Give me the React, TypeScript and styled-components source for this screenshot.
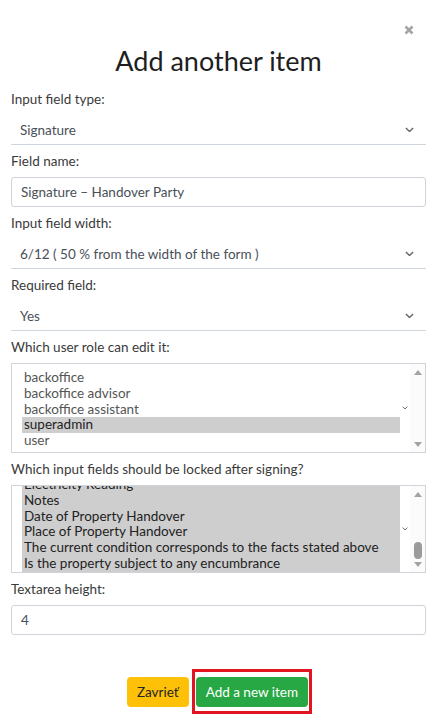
import React from 'react';
import styled, { createGlobalStyle } from 'styled-components';

const GlobalStyle = createGlobalStyle`
    html, body {
        margin: 0;
        padding: 0;
        background: #fff;
    }
    body {
        font-family: Lato, "Open Sans", "Liberation Sans", sans-serif;
        color: #333;
    }
`

const Modal = styled.div`
    width: 437px;
    box-sizing: border-box;
    padding: 22px 11px 0 11px;
`

const CloseRow = styled.div`
    display: flex;
    justify-content: flex-end;
    padding-right: 11px;
    height: 16px;
    align-items: center;
`

const CloseButton = styled.button`
    border: none;
    background: none;
    padding: 0;
    width: 12px;
    height: 12px;
    display: flex;
    align-items: center;
    justify-content: center;
    cursor: pointer;
`

const Title = styled.h2`
    margin: 6px 0 11px 0;
    text-align: center;
    font-size: 27px;
    line-height: 34px;
    font-weight: 400;
    color: #1e1e1e;
`

const Group = styled.div`
    display: flex;
    flex-direction: column;
    margin-bottom: 6px;
`

const Label = styled.label`
    font-size: 13.5px;
    line-height: 20px;
    color: #3a3a3a;
    margin-bottom: 6px;
`

const SelectRow = styled.div`
    height: 30px;
    box-sizing: border-box;
    border-bottom: 1px solid #cfd6de;
    display: flex;
    align-items: center;
    justify-content: space-between;
    padding: 0 12px 0 9px;
    font-size: 13.5px;
    color: #495057;
`

const TextInput = styled.div`
    height: 30px;
    box-sizing: border-box;
    border: 1px solid #ced4da;
    border-radius: 3px;
    display: flex;
    align-items: center;
    padding: 0 9px;
    font-size: 13.5px;
    color: #495057;
`

const ListBox = styled.div<{ $height: number }>`
    height: ${p => p.$height}px;
    box-sizing: border-box;
    border: 1px solid #ced4da;
    display: flex;
    overflow: hidden;
`

const Options = styled.div<{ $offset: number }>`
    flex: 1;
    margin-top: ${p => p.$offset}px;
    padding-left: 10px;
    display: flex;
    flex-direction: column;
`

const Option = styled.div<{ $selected?: boolean }>`
    font-size: 13.5px;
    line-height: 15.75px;
    padding: 0 2px;
    color: ${p => (p.$selected ? '#222' : '#555')};
    background: ${p => (p.$selected ? '#cecece' : 'transparent')};
    white-space: nowrap;
`

const ListHint = styled.div`
    width: 10px;
    display: flex;
    align-items: center;
    justify-content: center;
`

const ScrollTrack = styled.div`
    width: 15px;
    display: flex;
    flex-direction: column;
    align-items: center;
    justify-content: space-between;
    padding: 6px 0 5px 0;
    background: #fbfbfb;
`

const Arrow = styled.div<{ $up?: boolean }>`
    width: 0;
    height: 0;
    border-left: 4px solid transparent;
    border-right: 4px solid transparent;
    ${p => (p.$up ? 'border-bottom: 5px solid #a3a3a3;' : 'border-top: 5px solid #a3a3a3;')}
`

const TrackMiddle = styled.div`
    flex: 1;
    display: flex;
    flex-direction: column;
    justify-content: flex-end;
    align-items: center;
    padding-bottom: 3px;
`

const Thumb = styled.div`
    width: 8px;
    height: 17px;
    border-radius: 4px;
    background: #9b9b9b;
`

const Buttons = styled.div`
    display: flex;
    justify-content: center;
    align-items: center;
    margin-top: 34px;
    gap: 3px;
    padding-left: 2px;
`

const Button = styled.button<{ $color: string; $text: string }>`
    height: 30px;
    border: none;
    border-radius: 4px;
    padding: 0 10px;
    font-family: inherit;
    font-size: 13.5px;
    background-color: ${p => p.$color};
    color: ${p => p.$text};
`

const Highlight = styled.div`
    border: 3px solid #e0151f;
    padding: 5px 1px 4px 1px;
    display: flex;
`

const Chevron = ({ size = 9 }: { size?: number }) => (
    <svg width={size} height={size * 0.6} viewBox="0 0 10 6">
        <polyline points="1,1 5,5 9,1" fill="none" stroke="#666" strokeWidth="1.6" />
    </svg>
)

const roles = ['backoffice', 'backoffice advisor', 'backoffice assistant', 'superadmin', 'user']
const locked = [
    'Electricity Reading',
    'Notes',
    'Date of Property Handover',
    'Place of Property Handover',
    'The current condition corresponds to the facts stated above',
    'Is the property subject to any encumbrance',
]

const App = () => {
    return (
        <Modal>
            <GlobalStyle />
            <CloseRow>
                <CloseButton aria-label="close">
                    <svg width="10" height="10" viewBox="0 0 10 10">
                        <path d="M1.5 1.5 L8.5 8.5 M8.5 1.5 L1.5 8.5" stroke="#a5a5a5" strokeWidth="2.6" />
                    </svg>
                </CloseButton>
            </CloseRow>
            <Title>Add another item</Title>

            <Group>
                <Label>Input field type:</Label>
                <SelectRow>
                    <span>Signature</span>
                    <Chevron />
                </SelectRow>
            </Group>

            <Group>
                <Label>Field name:</Label>
                <TextInput>Signature – Handover Party</TextInput>
            </Group>

            <Group>
                <Label>Input field width:</Label>
                <SelectRow>
                    <span>6/12 ( 50 % from the width of the form )</span>
                    <Chevron />
                </SelectRow>
            </Group>

            <Group>
                <Label>Required field:</Label>
                <SelectRow>
                    <span>Yes</span>
                    <Chevron />
                </SelectRow>
            </Group>

            <Group>
                <Label>Which user role can edit it:</Label>
                <ListBox $height={90}>
                    <Options $offset={6}>
                        {roles.map(r => (
                            <Option key={r} $selected={r === 'superadmin'}>{r}</Option>
                        ))}
                    </Options>
                    <ListHint><Chevron size={6} /></ListHint>
                    <ScrollTrack>
                        <Arrow $up />
                        <Arrow />
                    </ScrollTrack>
                </ListBox>
            </Group>

            <Group>
                <Label>Which input fields should be locked after signing?</Label>
                <ListBox $height={88}>
                    <Options $offset={-9}>
                        {locked.map(r => (
                            <Option key={r} $selected>{r}</Option>
                        ))}
                    </Options>
                    <ListHint><Chevron size={6} /></ListHint>
                    <ScrollTrack>
                        <Arrow $up />
                        <TrackMiddle><Thumb /></TrackMiddle>
                        <Arrow />
                    </ScrollTrack>
                </ListBox>
            </Group>

            <Group>
                <Label>Textarea height:</Label>
                <TextInput>4</TextInput>
            </Group>

            <Buttons>
                <Button $color="#ffc107" $text="#212529">Zavrieť</Button>
                <Highlight>
                    <Button $color="#28a745" $text="#fff">Add a new item</Button>
                </Highlight>
            </Buttons>
        </Modal>
    );
};

export default App;
